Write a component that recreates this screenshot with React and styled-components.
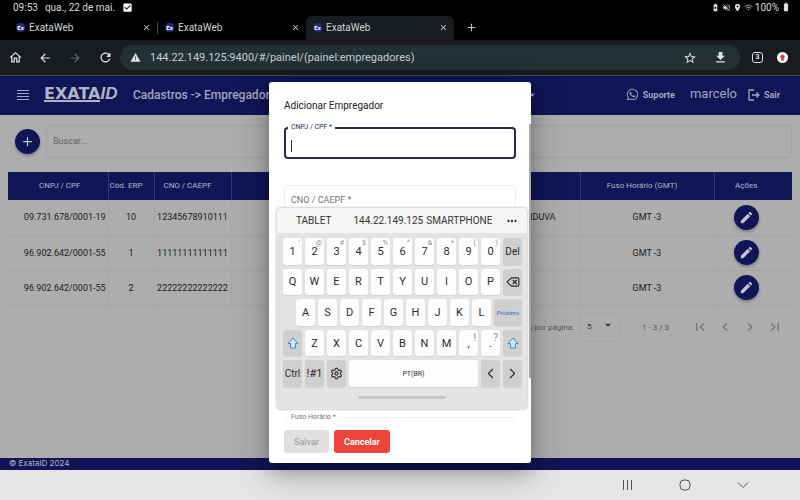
import React from "react";
import styled, { createGlobalStyle, css } from "styled-components";
import {
  MdBatterySaver,
  MdOutlineHome,
  MdArrowBack,
  MdArrowForward,
  MdRefresh,
  MdWarning,
  MdStarOutline,
  MdDownload,
  MdClose,
  MdAdd,
  MdCheckBox,
  MdVolumeOff,
  MdLocationOn,
  MdWifi,
  MdBatteryFull,
  MdEdit,
  MdFirstPage,
  MdLastPage,
  MdChevronLeft,
  MdChevronRight,
  MdArrowDropDown,
  MdMoreHoriz,
} from "react-icons/md";
import { FaWhatsapp } from "react-icons/fa";
import { ChevronLeft, ChevronRight, Delete, Settings } from "lucide-react";

const navy = "#0f1556";
const dim = "#adadad";

const GlobalStyle = createGlobalStyle`
  * { box-sizing: border-box; }
  body { margin: 0; font-family: Roboto, "Liberation Sans", sans-serif; }
  button, input, select { font: inherit; color: inherit; margin: 0; }
  button { border: 0; padding: 0; background: none; display: inline-flex; align-items: center; justify-content: center; }
  svg { display: block; flex: none; }
`;

const Screen = styled.div`
  min-height: 100vh;
  display: flex;
  flex-direction: column;
  background: #000;
`;

const StatusBar = styled.div`
  height: 16px;
  padding: 0 9px 2px 13px;
  display: flex;
  align-items: center;
  gap: 7px;
  font-size: 10px;
  color: #ddd;
`;

const StatusIcons = styled.div`
  margin-left: auto;
  display: flex;
  align-items: center;
  gap: 2px;
`;

const TabStrip = styled.div`
  height: 24px;
  padding-left: 9px;
  display: flex;
  align-items: stretch;
  color: #c4c7c9;
`;

const Tab = styled.div`
  width: 148px;
  padding: 0 6px 2px 7px;
  display: flex;
  align-items: center;
  gap: 4px;
  font-size: 10px;
  color: #d2d4d6;
  border-radius: 6px 6px 0 0;
  background: ${(p) => (p.$active ? "#191c1f" : "transparent")};

  button { margin-left: auto; }
`;

const TabDivider = styled.div`
  width: 1px;
  height: 12px;
  align-self: center;
  background: #4a4d50;
`;

const Favicon = styled.span`
  width: 9px;
  height: 9px;
  border-radius: 4px;
  background: #25277a;
  color: #fff;
  font-size: 6px;
  line-height: 9px;
  font-weight: 700;
  text-align: center;
`;

const NewTab = styled.button`
  width: 34px;
  padding-bottom: 2px;
`;

const BrowserBar = styled.div`
  height: 36px;
  padding: 0 12px 0 8px;
  display: flex;
  align-items: center;
  gap: 16px;
  background: #191c1f;
  border-bottom: 1px solid #414447;
  color: #dfe2e3;
`;

const NavButton = styled.button`
  width: 14px;
  height: 24px;
  color: ${(p) => (p.$muted ? "#63676a" : "#dfe2e3")};
`;

const Omnibox = styled.div`
  flex: 1;
  height: 25px;
  margin: 0 -4px 0 -8px;
  padding: 0 12px 0 10px;
  border-radius: 13px;
  display: flex;
  align-items: center;
  gap: 9px;
  background: #233034;

  input {
    flex: 1;
    min-width: 0;
    border: 0;
    padding: 0;
    outline: 0;
    background: none;
    font-size: 11px;
    color: #c6cdcf;
  }
  button + button { margin-left: 7px; }
`;

const TabCount = styled.button`
  width: 11px;
  height: 11px;
  border: 1px solid #dfe2e3;
  border-radius: 3px;
  font-size: 7px;
  line-height: 9px;
  font-weight: 700;
`;

const UpdateButton = styled.button`
  width: 11px;
  height: 11px;
  margin-left: -2px;
  border-radius: 50%;
  background: #fff;
`;

const AppArea = styled.div`
  position: relative;
  flex: 1;
  display: flex;
  flex-direction: column;
  background: ${dim};
`;

const AppHeader = styled.header`
  height: 39px;
  padding: 0 20px 2px 17px;
  display: flex;
  align-items: center;
  background: ${navy};
  color: #a4a6bd;
`;

const Logo = styled.div`
  width: 80px;
  margin-left: 15px;
  display: flex;
  align-items: flex-start;
  font-family: "DejaVu Sans", sans-serif;
  font-size: 16px;
  font-weight: 700;
  color: #b1b3c4;

  b { border-bottom: 2px solid #b1b3c4; line-height: 13px; }
  i { font-family: "Liberation Sans", sans-serif; font-size: 17px; line-height: 13px; }
`;

const PageTitle = styled.h1`
  margin: 0 0 0 9px;
  width: 392px;
  font-size: 12px;
  font-weight: 500;
  white-space: nowrap;
`;

const Spacer = styled.div`
  flex: 1;
`;

const HeaderLink = styled.a`
  display: flex;
  align-items: center;
  gap: 4px;
  color: inherit;
  text-decoration: none;
  font-size: 9px;
  font-weight: 700;
`;

const UserName = styled.span`
  margin: 0 11px 0 15px;
  font-size: 13px;
  line-height: 16px;
  font-weight: 400;
  padding-bottom: 2px;
`;

const Content = styled.main`
  flex: 1;
  padding: 10px 8px;
`;

const SearchRow = styled.div`
  display: flex;
  align-items: center;
  gap: 6px;
  padding-left: 7px;

  input {
    flex: 1;
    height: 33px;
    padding: 0 6px 2px;
    border: 1px solid #a2a2a2;
    border-radius: 4px;
    background: transparent;
    font-size: 9px;
  }
  input::placeholder { color: #626262; opacity: 1; }
`;

const RoundButton = styled.button`
  width: 25px;
  height: 25px;
  border-radius: 50%;
  background: ${navy};
  color: #c3c4d0;
  box-shadow: 0 2px 3px rgba(0, 0, 0, 0.28);
  vertical-align: middle;
`;

const Table = styled.table`
  width: 100%;
  margin-top: 14px;
  border-collapse: collapse;
  table-layout: fixed;
  text-align: center;
  font-size: 9px;
`;

const Col = styled.col`
  width: ${(p) => (p.$w ? `${p.$w}px` : "auto")};
`;

const HeadCell = styled.th`
  height: 28px;
  padding: 0 10px 2px 0;
  background: ${navy};
  color: #b4b6c8;
  font-size: 8px;
  font-weight: 400;
  white-space: nowrap;
  border-right: 1px solid #33386c;

  &:first-child { padding-left: 14px; }
  &:last-child { padding-right: 14px; border-right: 0; }
`;

const Cell = styled.td`
  height: 35px;
  padding: 0;
  color: #202020;
  white-space: nowrap;
  border-right: 1px solid #a8a8a8;
  border-bottom: 1px solid #a3a3a3;
  text-align: ${(p) => (p.$end ? "right" : "center")};
  ${(p) => p.$end && css`padding-right: 24px;`}

  &:first-child { padding-left: 14px; }
  &:last-child { padding-right: 14px; border-right: 0; }
`;

const Paginator = styled.div`
  display: flex;
  align-items: center;
  justify-content: flex-end;
  padding: 7px 9px 0 0;
  font-size: 8px;
  color: #565656;
`;

const PageSize = styled.div`
  position: relative;
  width: 41px;
  height: 29px;
  margin: 0 22px 0 5px;
  border: 1px solid #a6a6a6;
  border-radius: 3px;
  color: #333;

  select {
    width: 100%;
    height: 26px;
    border: 0;
    padding: 0 7px;
    appearance: none;
    background: transparent;
  }
  svg { position: absolute; right: 4px; top: 4px; pointer-events: none; }
`;

const PageButtons = styled.div`
  display: flex;
  gap: 9px;
  margin-left: 23px;
  color: #747474;
`;

const AppFooter = styled.footer`
  height: 12px;
  padding-left: 9px;
  background: ${navy};
  color: #b4b6c8;
  font-size: 8px;
  line-height: 11px;
  font-family: Inter, "Liberation Sans", sans-serif;
`;

const Overlay = styled.div`
  position: absolute;
  inset: 0;
  display: flex;
  align-items: center;
  justify-content: center;
`;

const Dialog = styled.form`
  width: 262px;
  margin-bottom: 1px;
  border-radius: 3px;
  background: #fff;
  box-shadow: 0 8px 15px -4px rgba(0, 0, 0, 0.3), 0 10px 32px 3px rgba(0, 0, 0, 0.25);
`;

const DialogTitle = styled.h2`
  margin: 0;
  padding: 17px 15px 0;
  height: 42px;
  font-size: 10px;
  line-height: 14px;
  font-weight: 400;
  color: #222;
`;

const Fields = styled.div`
  height: 298px;
  padding: 3px 13px 0 15px;
  overflow: hidden;
  border-right: 2px solid #a8a8a8;
  border-image: linear-gradient(#a8a8a8 85%, #fff 85%) 1;
  display: grid;
  grid-auto-rows: 32px;
  row-gap: 26px;
`;

const Field = styled.div`
  position: relative;
  grid-row: ${(p) => p.$row};

  input {
    width: 100%;
    height: 32px;
    padding: 4px 6px 0;
    outline: 0;
    font-size: 9px;
    background: #fff;
    border: ${(p) => (p.$focused ? "2px solid #2a2858" : "1px solid #f0f0f0")};
    border-radius: 4px;
  }
  label {
    position: absolute;
    left: 4px;
    top: ${(p) => (p.$inside ? "9px" : "-5px")};
    padding: 0 3px;
    background: #fff;
    font-size: ${(p) => (p.$inside ? "9px" : "7px")};
    line-height: ${(p) => (p.$inside ? "12px" : "10px")};
    color: ${(p) => (p.$focused ? "#2a2860" : "#747474")};
  }
`;

const Caret = styled.span`
  position: absolute;
  left: 7px;
  top: 13px;
  width: 1px;
  height: 12px;
  background: #333;
`;

const Actions = styled.div`
  display: flex;
  gap: 5px;
  padding: 8px 15px 10px;
`;

const ActionButton = styled.button`
  height: 23px;
  padding: 0 10px;
  border-radius: 3px;
  font-size: 9px;
  font-weight: ${(p) => (p.$danger ? 700 : 500)};
  background: ${(p) => (p.$danger ? "#f0433a" : "#e0e0e0")};
  color: ${(p) => (p.$danger ? "#fff" : "#a6a6a6")};
`;

const Keyboard = styled.div`
  position: absolute;
  top: 132px;
  left: calc(50% - 123px);
  width: 250px;
  border-radius: 4px;
  overflow: hidden;
  background: #e4e4e4;
  box-shadow: 0 0 2px 1px rgba(0, 0, 0, 0.18);
`;

const Suggestions = styled.div`
  height: 25px;
  padding: 0 8px 0 19px;
  display: flex;
  align-items: center;
  gap: 3px;
  background: #f6f6f6;
  font-size: 10px;
  color: #333;

  button:first-child { margin-right: 19px; }
  button:last-child { margin-left: auto; }
`;

const Keys = styled.div`
  height: 149px;
  margin: 5px 5px 0 6px;
  display: grid;
  grid-auto-rows: 1fr;
  row-gap: 4px;
`;

const KeyRow = styled.div`
  display: flex;
  gap: 3px;
`;

const RowIndent = styled.span`
  width: 10px;
`;

const Key = styled.button`
  position: relative;
  flex: ${(p) => (p.$wide ? "1 1 0" : "0 0 calc((100% - 30px) / 11)")};
  min-width: 0;
  border-radius: 3px;
  background: ${(p) => (p.$gray ? "#cfcfcf" : "#fdfdfd")};
  color: ${(p) => (p.$blue ? "#3c82bf" : "#2c2c2c")};
  font-size: ${(p) => (p.$small ? (p.$blue ? "6px" : "7px") : p.$word ? "10px" : "11px")};
  font-weight: ${(p) => (p.$blue ? 500 : 400)};
  white-space: nowrap;
  box-shadow: 0 1px 1px rgba(0, 0, 0, 0.08);
`;

const KeyHint = styled.span`
  position: absolute;
  top: 1px;
  right: 2px;
  font-size: ${(p) => (p.$large ? "10px" : "7px")};
  line-height: ${(p) => (p.$large ? "14px" : "8px")};
  color: #888;
`;

const Handle = styled.div`
  width: 88px;
  height: 3px;
  margin: 9px auto 10px;
  border-radius: 2px;
  background: #c6c6c6;
`;

const SystemNav = styled.nav`
  height: 30px;
  padding-right: 51px;
  display: flex;
  justify-content: flex-end;
  align-items: center;
  gap: 46px;
  background: #e6e6e6;
  color: #555;
`;

const MenuIcon = () => (
  <svg width="12" height="11" viewBox="0 0 12 11" fill="#a4a6bd">
    <path d="M0 1h12v1H0zM0 4h12v1H0zM0 7h12v1H0zM0 10h12v1H0z" />
  </svg>
);

const ExitIcon = () => (
  <svg width="12" height="12" viewBox="0 0 12 12" fill="none" stroke="currentColor" strokeWidth="1.3">
    <path d="M6 1H1v10h5M4 6h7M8.500 3.500 11 6 8.500 8.500" />
  </svg>
);

const ShiftIcon = () => (
  <svg width="12" height="12" viewBox="0 0 12 12" fill="#d3e8fb" stroke="#3c8ad0" strokeWidth="1" strokeLinejoin="round">
    <path d="M6 1 1 6.500h2.500V11h5V6.500H11z" />
  </svg>
);

const UpIcon = () => (
  <svg width="7" height="7" viewBox="0 0 7 7" fill="#d23434">
    <path d="M3.500 0 0.500 3.500h1.700V6.500h2.600V3.500H6.500z" />
  </svg>
);

const symbols = ["’", "@", "#", "$", "%", "^", "&", "*", "(", ")"];
const digits = "1234567890".split("");

const employers = [
  { doc: "09.731.678/0001-19", erp: "10", cno: "12345678910111", name: "CATANDUVA", tz: "GMT -3" },
  { doc: "96.902.642/0001-55", erp: "1", cno: "11111111111111", name: "", tz: "GMT -3" },
  { doc: "96.902.642/0001-55", erp: "2", cno: "22222222222222", name: "", tz: "GMT -3" },
];

const headings = ["CNPJ / CPF", "Cód. ERP", "CNO / CAEPF", "", "Fuso Horário (GMT)", "Ações"];

function BrowserTab({ active }) {
  return (
    <Tab $active={active}>
      <Favicon>Ex</Favicon>
      <span>ExataWeb</span>
      <button aria-label="Fechar aba"><MdClose size={9} /></button>
    </Tab>
  );
}

function BrowserChrome() {
  return (
    <>
      <StatusBar>
        <span>09:53</span>
        <span>qua., 22 de mai.</span>
        <MdCheckBox size={11} color="#fff" />
        <StatusIcons>
          <MdBatterySaver size={9} />
          <MdVolumeOff size={9} />
          <MdLocationOn size={9} />
          <MdWifi size={9} color="#999" />
          <span>100%</span>
          <MdBatteryFull size={10} />
        </StatusIcons>
      </StatusBar>
      <TabStrip>
        <BrowserTab />
        <TabDivider />
        <BrowserTab />
        <BrowserTab active />
        <NewTab aria-label="Nova aba"><MdAdd size={13} /></NewTab>
      </TabStrip>
      <BrowserBar>
        <NavButton aria-label="Início"><MdOutlineHome size={15} /></NavButton>
        <NavButton aria-label="Voltar"><MdArrowBack size={14} /></NavButton>
        <NavButton $muted aria-label="Avançar"><MdArrowForward size={14} /></NavButton>
        <NavButton aria-label="Recarregar"><MdRefresh size={15} /></NavButton>
        <Omnibox>
          <MdWarning size={11} />
          <input aria-label="Endereço" defaultValue="144.22.149.125:9400/#/painel/(painel:empregadores)" />
          <button aria-label="Favorito"><MdStarOutline size={14} /></button>
          <button aria-label="Baixar"><MdDownload size={15} /></button>
        </Omnibox>
        <TabCount aria-label="3 abas">3</TabCount>
        <UpdateButton aria-label="Atualizar"><UpIcon /></UpdateButton>
      </BrowserBar>
    </>
  );
}

function EmployerTable() {
  return (
    <Table>
      <colgroup>
        <Col $w={100} />
        <Col $w={46} />
        <Col $w={77} />
        <Col />
        <Col $w={134} />
        <Col $w={78} />
      </colgroup>
      <thead>
        <tr>{headings.map((h, i) => <HeadCell key={i}>{h}</HeadCell>)}</tr>
      </thead>
      <tbody>
        {employers.map((e) => (
          <tr key={e.cno}>
            <Cell>{e.doc}</Cell>
            <Cell>{e.erp}</Cell>
            <Cell>{e.cno}</Cell>
            <Cell $end>{e.name}</Cell>
            <Cell>{e.tz}</Cell>
            <Cell><RoundButton aria-label="Editar"><MdEdit size={15} /></RoundButton></Cell>
          </tr>
        ))}
      </tbody>
    </Table>
  );
}

function AddDialog() {
  return (
    <Overlay>
      <Dialog role="dialog" aria-labelledby="dialog-title">
        <DialogTitle id="dialog-title">Adicionar Empregador</DialogTitle>
        <Fields>
          <Field $row={1} $focused>
            <input id="cnpj" />
            <label htmlFor="cnpj">CNPJ / CPF *</label>
            <Caret />
          </Field>
          <Field $row={2} $inside>
            <input id="cno" />
            <label htmlFor="cno">CNO / CAEPF *</label>
          </Field>
          <Field $row={6}>
            <input id="fuso" />
            <label htmlFor="fuso">Fuso Horário *</label>
          </Field>
        </Fields>
        <Actions>
          <ActionButton type="button" disabled>Salvar</ActionButton>
          <ActionButton type="button" $danger>Cancelar</ActionButton>
        </Actions>
      </Dialog>
    </Overlay>
  );
}

function OnScreenKeyboard() {
  return (
    <Keyboard>
      <Suggestions>
        <button>TABLET</button>
        <button>144.22.149.125</button>
        <button>SMARTPHONE</button>
        <button aria-label="Mais"><MdMoreHoriz size={14} /></button>
      </Suggestions>
      <Keys>
        <KeyRow>
          {digits.map((d, i) => (
            <Key key={d}>{d}<KeyHint>{symbols[i]}</KeyHint></Key>
          ))}
          <Key $gray $word>Del</Key>
        </KeyRow>
        <KeyRow>
          {"QWERTYUIOP".split("").map((k) => <Key key={k}>{k}</Key>)}
          <Key $gray aria-label="Apagar"><Delete size={14} /></Key>
        </KeyRow>
        <KeyRow>
          <RowIndent />
          {"ASDFGHJKL".split("").map((k) => <Key key={k}>{k}</Key>)}
          <Key $gray $wide $small $blue>Próximo</Key>
        </KeyRow>
        <KeyRow>
          <Key $gray aria-label="Shift"><ShiftIcon /></Key>
          {"ZXCVBNM".split("").map((k) => <Key key={k}>{k}</Key>)}
          <Key>,<KeyHint $large>!</KeyHint></Key>
          <Key>.<KeyHint $large>?</KeyHint></Key>
          <Key $gray aria-label="Shift"><ShiftIcon /></Key>
        </KeyRow>
        <KeyRow>
          <Key $gray $word>Ctrl</Key>
          <Key $gray>!#1</Key>
          <Key $gray aria-label="Configurações"><Settings size={13} /></Key>
          <Key $wide $small>PT(BR)</Key>
          <Key $gray aria-label="Esquerda"><ChevronLeft size={17} strokeWidth={1.5} /></Key>
          <Key $gray aria-label="Direita"><ChevronRight size={17} strokeWidth={1.5} /></Key>
        </KeyRow>
      </Keys>
      <Handle />
    </Keyboard>
  );
}

export default function App() {
  return (
    <Screen>
      <GlobalStyle />
      <BrowserChrome />
      <AppArea>
        <AppHeader>
          <button aria-label="Menu"><MenuIcon /></button>
          <Logo><b>EXATA</b><i>ID</i></Logo>
          <PageTitle>Cadastros -&gt; Empregadores</PageTitle>
          <MdArrowDropDown size={14} />
          <Spacer />
          <HeaderLink href="#suporte"><FaWhatsapp size={13} />Suporte</HeaderLink>
          <UserName>marcelo</UserName>
          <HeaderLink href="#sair"><ExitIcon />Sair</HeaderLink>
        </AppHeader>
        <Content>
          <SearchRow>
            <RoundButton aria-label="Adicionar"><MdAdd size={15} /></RoundButton>
            <input aria-label="Buscar" placeholder="Buscar..." />
          </SearchRow>
          <EmployerTable />
          <Paginator>
            <label htmlFor="page-size">Itens por página:</label>
            <PageSize>
              <select id="page-size" defaultValue="5"><option>5</option><option>10</option></select>
              <MdArrowDropDown size={14} />
            </PageSize>
            <span>1 - 3 / 3</span>
            <PageButtons>
              <button aria-label="Primeira página"><MdFirstPage size={16} /></button>
              <button aria-label="Página anterior"><MdChevronLeft size={16} /></button>
              <button aria-label="Próxima página"><MdChevronRight size={16} /></button>
              <button aria-label="Última página"><MdLastPage size={16} /></button>
            </PageButtons>
          </Paginator>
        </Content>
        <AppFooter>© ExataID 2024</AppFooter>
        <AddDialog />
        <OnScreenKeyboard />
      </AppArea>
      <SystemNav>
        <button aria-label="Recentes">
          <svg width="12" height="12" viewBox="0 0 12 12" stroke="currentColor"><path d="M2.500 1v10M6.500 1v10M10.500 1v10" /></svg>
        </button>
        <button aria-label="Início">
          <svg width="12" height="12" viewBox="0 0 12 12" fill="none" stroke="currentColor"><rect x="1" y="1" width="10" height="10" rx="4" /></svg>
        </button>
        <button aria-label="Ocultar teclado">
          <svg width="12" height="12" viewBox="0 0 12 12" fill="none" stroke="currentColor"><path d="M1 3.500 6 8.500 11 3.500" /></svg>
        </button>
      </SystemNav>
    </Screen>
  );
}
